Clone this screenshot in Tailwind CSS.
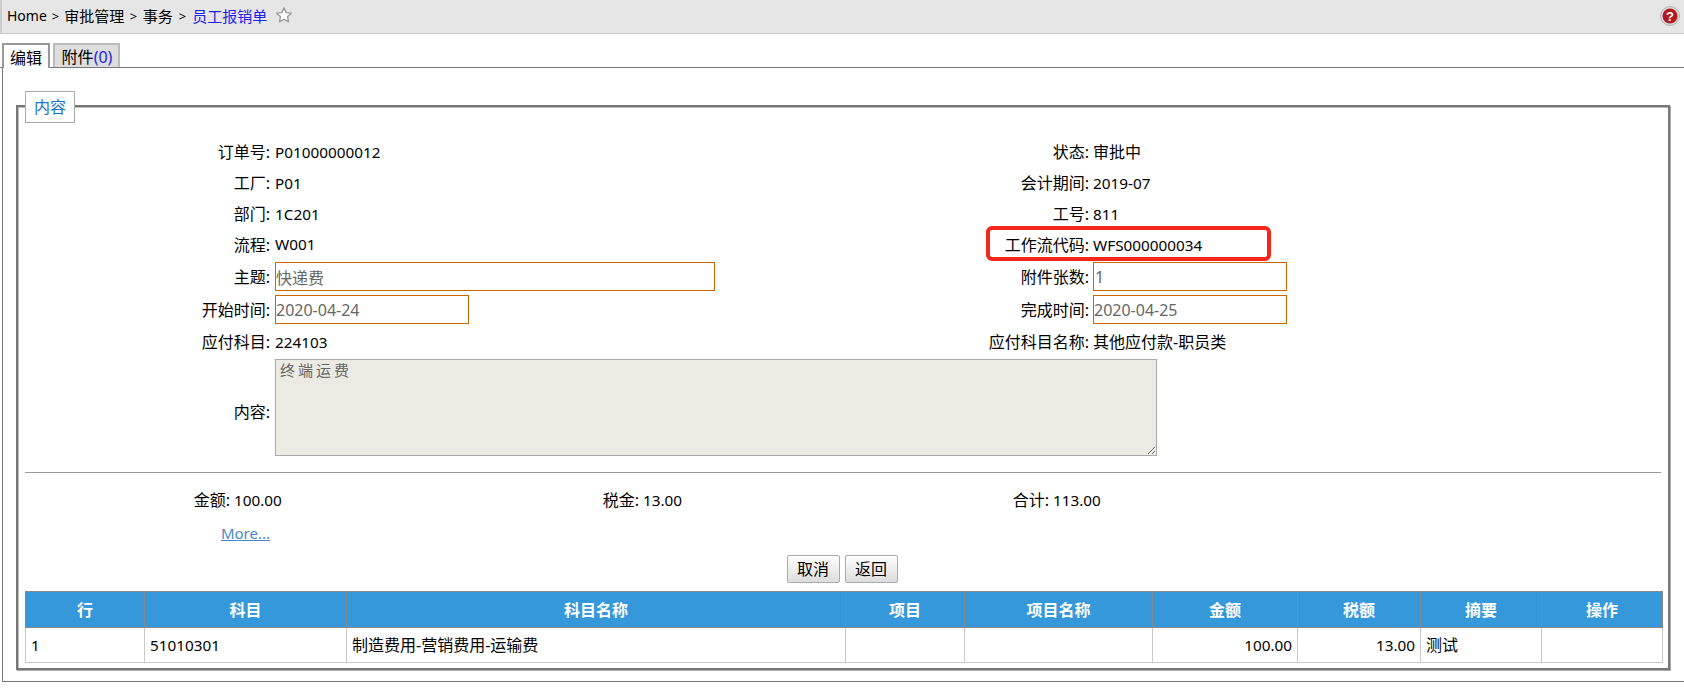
<!DOCTYPE html>
<html lang="zh-CN">
  <head>
    <meta charset="UTF-8" />
    <meta name="viewport" content="width=device-width, initial-scale=1.0" />
    <title>员工报销单</title>
    <script src="https://cdn.jsdelivr.net/npm/@tailwindcss/browser@4"></script>
  </head>
  <body class="bg-white h-[695px] overflow-hidden text-[16px] leading-5 text-black [font-family:'Noto_Sans','Noto_Sans_CJK_SC',sans-serif]">
    <!-- Breadcrumb -->
    <header class="h-[34px] bg-[#e6e6e6] border-b border-[#cccccc] border-l-2 border-l-[#cccccc] pl-[5px] pr-[4px] pb-[2px] flex items-center text-[15px]">
      <span class="text-[14px]">Home</span>
      <span class="mx-[5px] text-[13px]">&gt;</span>
      <span>审批管理</span>
      <span class="mx-[5.5px] text-[13px]">&gt;</span>
      <span>事务</span>
      <span class="mx-[6px] text-[13px]">&gt;</span>
      <span class="text-[#2222ee]">员工报销单</span>
      <svg class="ml-[8px] mb-[1px]" width="18" height="18" viewBox="0 0 24 24" fill="#fafafa" stroke="#9a9a9a" stroke-width="1.8" stroke-linejoin="round">
        <path d="M12 2.5l2.9 6.3 6.9.8-5.1 4.7 1.4 6.8-6.1-3.4-6.1 3.4 1.4-6.8-5.1-4.7 6.9-.8z" />
      </svg>
      <svg class="ml-auto" width="20" height="20" viewBox="0 0 20 20">
        <circle cx="10" cy="10" r="9.5" fill="#d8d8d8" stroke="#b5b5b5" />
        <circle cx="10" cy="10" r="7.5" fill="#b3191f" />
        <text x="10" y="14.5" text-anchor="middle" font-size="13" font-weight="700" fill="#ffffff" font-family="Liberation Sans">?</text>
      </svg>
    </header>

    <!-- Tabs -->
    <nav class="h-[34px] pl-[2px] flex items-end gap-[3px] border-b border-[#777777] -mb-px relative z-10">
      <div class="w-[48px] h-[25px] -mb-px pt-[3px] bg-white border-2 border-b-0 border-[#999999] text-center">编辑</div>
      <div class="w-[67px] h-[24px] pt-[2px] pl-[1px] bg-[#dddddd] border-2 border-b-0 border-[#bbbbbb] text-center">附件<span class="text-[#2222ee]">(0)</span></div>
    </nav>

    <!-- Main panel -->
    <main class="ml-[2px] h-[615px] border-l border-b border-[#777777] pl-[13px] pt-[38px]">
      <section class="relative w-[1654px] h-[565px] border-2 border-[#777777] shadow-[1px_1px_0_#aaaaaa,inset_1px_1px_0_#bbbbbb]">
        <div class="absolute left-[7px] top-[-16px] w-[50px] h-[32px] bg-white border border-[#aaaaaa] text-[#1a73cc] text-center leading-[30px]">内容</div>

        <div class="pt-[29px]">
          <div class="flex h-[31px] items-center">
            <span class="w-[252px] text-right">订单号:</span>
            <span class="w-[567px] pl-[5px] text-[15.3px]">P01000000012</span>
            <span class="w-[252px] text-right">状态:</span>
            <span class="pl-[4px]">审批中</span>
          </div>
          <div class="flex h-[31px] items-center">
            <span class="w-[252px] text-right">工厂:</span>
            <span class="w-[567px] pl-[5px] text-[15.3px]">P01</span>
            <span class="w-[252px] text-right">会计期间:</span>
            <span class="pl-[4px] text-[15.3px]">2019-07</span>
          </div>
          <div class="flex h-[31px] items-center">
            <span class="w-[252px] text-right">部门:</span>
            <span class="w-[567px] pl-[5px] text-[15.3px]">1C201</span>
            <span class="w-[252px] text-right">工号:</span>
            <span class="pl-[4px] text-[15.3px]">811</span>
          </div>
          <div class="relative flex h-[31px] items-center">
            <span class="w-[252px] text-right">流程:</span>
            <span class="w-[567px] pl-[5px] text-[15.3px] -mt-[2px]">W001</span>
            <span class="w-[252px] text-right">工作流代码:</span>
            <span class="pl-[4px] text-[15.3px]">WFS000000034</span>
            <div class="absolute left-[968px] top-[-3px] w-[285px] h-[35px] border-[4px] border-[#f5261b] rounded-[6px]"></div>
          </div>
          <div class="flex h-[33px] items-center">
            <span class="w-[252px] text-right">主题:</span>
            <span class="w-[567px] pl-[5px]"><input readonly value="快递费" class="w-[440px] h-[29px] block border border-[#cc6600] px-0 text-[#666666] outline-none" /></span>
            <span class="w-[252px] text-right">附件张数:</span>
            <span class="pl-[4px]"><input readonly value="1" class="w-[194px] h-[29px] block border border-[#cc6600] px-[1px] text-[#666666] outline-none" /></span>
          </div>
          <div class="flex h-[33px] items-center">
            <span class="w-[252px] text-right">开始时间:</span>
            <span class="w-[567px] pl-[5px]"><input readonly value="2020-04-24" class="w-[194px] h-[29px] block border border-[#cc6600] px-0 text-[#666666] outline-none" /></span>
            <span class="w-[252px] text-right">完成时间:</span>
            <span class="pl-[4px]"><input readonly value="2020-04-25" class="w-[194px] h-[29px] block border border-[#cc6600] px-0 text-[#666666] outline-none" /></span>
          </div>
          <div class="flex h-[31px] items-center">
            <span class="w-[252px] text-right">应付科目:</span>
            <span class="w-[567px] pl-[5px] text-[15.3px]">224103</span>
            <span class="w-[252px] text-right">应付科目名称:</span>
            <span class="pl-[4px]">其他应付款-职员类</span>
          </div>
          <div class="flex items-center mt-[2px]">
            <span class="w-[252px] text-right pt-[8px]">内容:</span>
            <span class="pl-[5px]"><textarea readonly class="block w-[882px] h-[97px] bg-[#ebeae3] border border-[#aaaaaa] px-[4px] py-0 text-[15px] leading-5 tracking-[3px] text-[#666666] outline-none">终端运费</textarea></span>
          </div>
        </div>

        <div class="mx-[7px] mt-[16px] mb-[16px] h-px bg-[#999999]"></div>

        <div class="flex h-[22px] items-center">
          <span class="w-[212px] text-right">金额:</span>
          <span class="w-[260px] pl-[4px] text-[15.3px]">100.00</span>
          <span class="w-[149px] text-right">税金:</span>
          <span class="w-[251px] pl-[4px] text-[15.3px]">13.00</span>
          <span class="w-[159px] text-right">合计:</span>
          <span class="pl-[4px] text-[15.3px]">113.00</span>
        </div>
        <div class="w-[252px] text-right mt-[12px] h-[22px] text-[15px]"><a href="#" class="text-[#4a86c8] underline">More...</a></div>

        <div class="flex justify-center gap-[5px] mt-[10px] pr-[2px]">
          <button class="w-[53px] h-[28px] bg-linear-to-b from-[#ffffff] to-[#dddddd] border border-[#aaaaaa] rounded-[2px]">取消</button>
          <button class="w-[53px] h-[28px] bg-linear-to-b from-[#ffffff] to-[#dddddd] border border-[#aaaaaa] rounded-[2px]">返回</button>
        </div>

        <table class="ml-[7px] mt-[8px] w-[1638px] table-fixed border-collapse">
          <colgroup>
            <col class="w-[119px]" /><col class="w-[202px]" /><col class="w-[499px]" /><col class="w-[119px]" /><col class="w-[188px]" /><col class="w-[145px]" /><col class="w-[123px]" /><col class="w-[121px]" /><col />
          </colgroup>
          <thead>
            <tr class="h-[36px] bg-[#3498db] text-white font-bold text-center">
              <th class="border border-[#888888]">行</th>
              <th class="border border-[#888888]">科目</th>
              <th class="border border-[#888888]">科目名称</th>
              <th class="border border-[#888888]">项目</th>
              <th class="border border-[#888888]">项目名称</th>
              <th class="border border-[#888888]">金额</th>
              <th class="border border-[#888888]">税额</th>
              <th class="border border-[#888888]">摘要</th>
              <th class="border border-[#888888]">操作</th>
            </tr>
          </thead>
          <tbody>
            <tr class="h-[35px]">
              <td class="border border-[#c8c8c8] px-[5px] text-[15.3px]">1</td>
              <td class="border border-[#c8c8c8] px-[5px] text-[15.3px]">51010301</td>
              <td class="border border-[#c8c8c8] px-[5px]">制造费用-营销费用-运输费</td>
              <td class="border border-[#c8c8c8] px-[5px]"></td>
              <td class="border border-[#c8c8c8] px-[5px]"></td>
              <td class="border border-[#c8c8c8] px-[5px] text-right text-[15.3px]">100.00</td>
              <td class="border border-[#c8c8c8] px-[5px] text-right text-[15.3px]">13.00</td>
              <td class="border border-[#c8c8c8] px-[5px]">测试</td>
              <td class="border border-[#c8c8c8] px-[5px]"></td>
            </tr>
          </tbody>
        </table>
      </section>
    </main>
  </body>
</html>
